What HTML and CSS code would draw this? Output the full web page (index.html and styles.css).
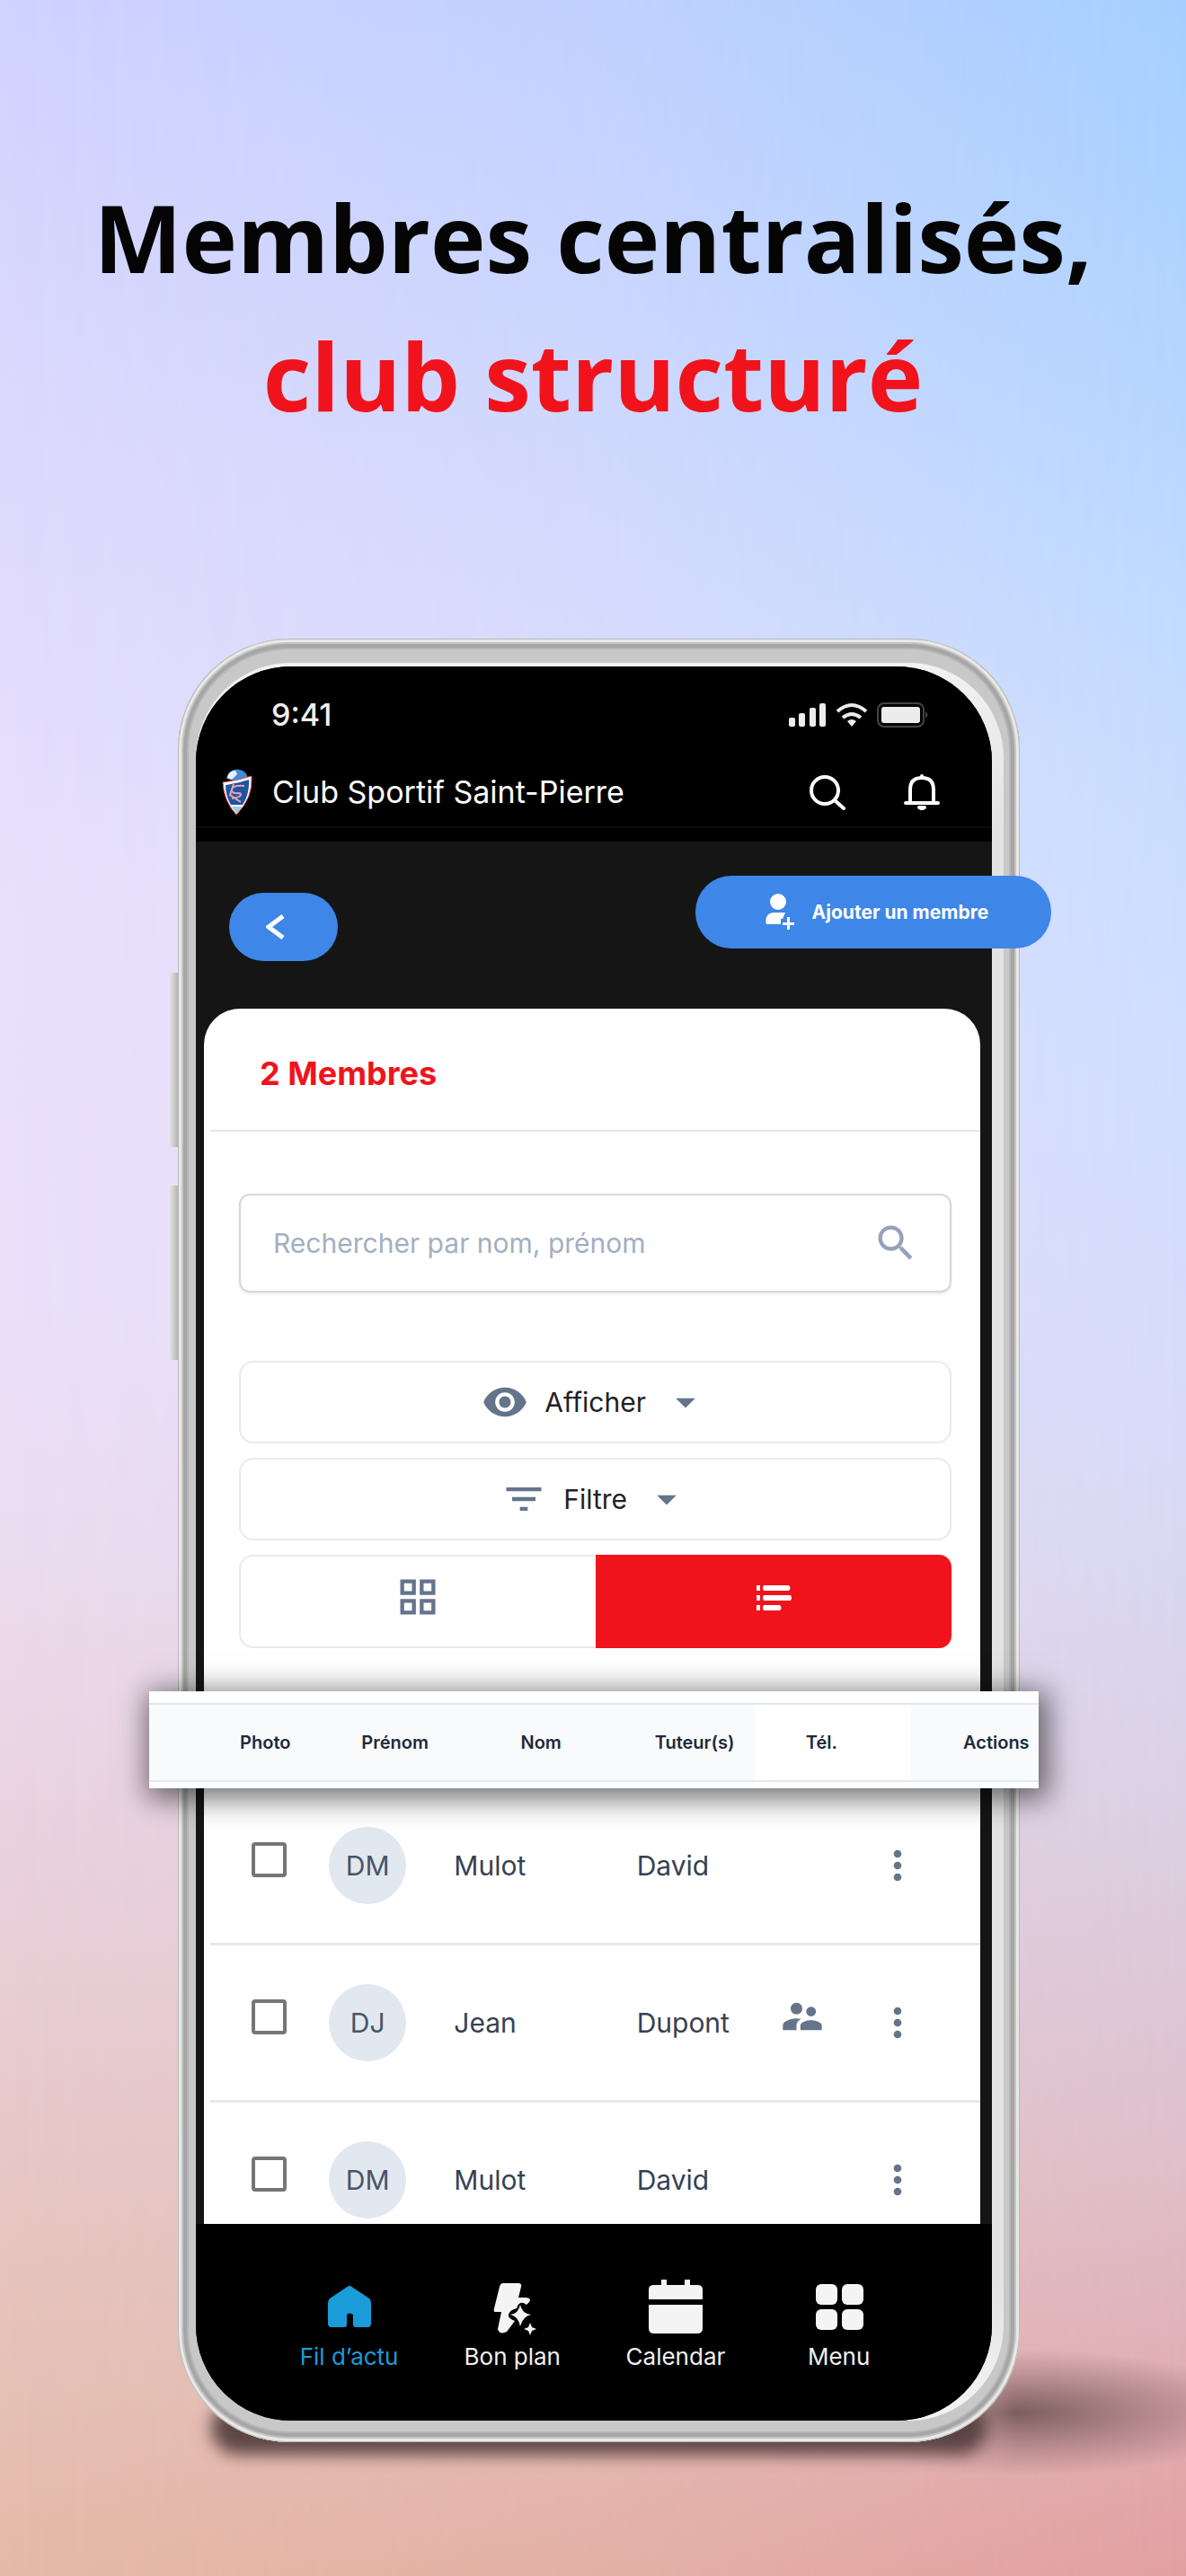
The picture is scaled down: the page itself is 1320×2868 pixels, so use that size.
FILE: index.html
```html
<!DOCTYPE html>
<html lang="fr">
<head>
    <meta charset="UTF-8">
    <meta name="viewport" content="width=device-width, initial-scale=1.0">
    <title>Membres centralisés, club structuré</title>
    <link rel="stylesheet" href="styles.css">
</head>
<body>
    <h1 class="headline">Membres centralisés, <span>club structuré</span></h1>

    <main class="stage">
        <div class="phone">
            <div class="bezel">
                <div class="screen">
                    <header class="topbar">
                        <div class="status">
                            <span class="time">9:41</span>
                            <svg class="status-icons" viewBox="0 0 156 28" aria-hidden="true">
                                <g fill="#ececec">
                                    <rect x="0" y="17" width="7" height="10" rx="2"/>
                                    <rect x="11" y="12" width="7" height="15" rx="2"/>
                                    <rect x="23" y="6" width="7" height="21" rx="2"/>
                                    <rect x="34" y="1" width="7" height="26" rx="2"/>
                                    <path d="M70 27l-5-6q5-4 10 0z"/>
                                    <rect x="103" y="5" width="43" height="18" rx="3"/>
                                </g>
                                <path d="M54 10q16-14 32 0M60 17q10-8 20 0" fill="none" stroke="#ececec" stroke-width="4"/>
                                <rect x="99" y="1" width="51" height="26" rx="7" fill="none" stroke="#444" stroke-width="2"/>
                                <path d="M152 10q5 4 0 8z" fill="#444"/>
                            </svg>
                        </div>
                        <div class="appbar">
                            <svg class="logo" viewBox="0 0 34 52" aria-hidden="true">
                                <path d="M5 11C7-3 27-3 29 11L17 14z" fill="#3b8fd6"/>
                                <path d="M6 10C7 4 11 2 15 2l2 4-6 6z" fill="#e8f1fb"/>
                                <path d="M1 15Q17 13 33 8Q35 32 16 51Q2 36 1 15z" fill="#fff" stroke="#d8444c"/>
                                <path d="M4 18Q18 16 30 12Q31 28 23 40H10Q4 30 4 18z" fill="#1f55a0"/>
                                <path d="M25 19q-13-1-14 4t9 4q4 4-9 6M13 17l-4 12 12 8" fill="none" stroke="#e6a3b4" stroke-width="2"/>
                                <path d="M11 42h12l-7 8z" fill="#a7c8ea"/>
                            </svg>
                            <span class="club">Club Sportif Saint-Pierre</span>
                            <button class="icon-btn" type="button" aria-label="Rechercher">
                                <svg viewBox="0 0 40 40" fill="none" stroke="#fff" stroke-width="4" stroke-linecap="round"><circle cx="17" cy="18" r="15"/><path d="M28 29l10 9"/></svg>
                            </button>
                            <button class="icon-btn" type="button" aria-label="Notifications">
                                <svg viewBox="0 0 40 40" fill="none" stroke="#fff" stroke-width="4" stroke-linecap="round" stroke-linejoin="round"><path d="M7 31V17C7 8 12 4 20 4s13 4 13 13v14M2 32h36"/><path d="M20 2v2"/><path d="M17 37h6l-2 1h-2z"/></svg>
                            </button>
                        </div>
                    </header>

                    <div class="toolbar">
                        <button class="back" type="button" aria-label="Retour">
                            <svg viewBox="0 0 22 28"><path d="M19 2L3 14l16 12" fill="none" stroke="#fff" stroke-width="5"/></svg>
                        </button>
                        <button class="add" type="button">
                            <svg viewBox="0 0 32 40" fill="#fff"><ellipse cx="14" cy="9" rx="9" ry="9"/><path d="M8 21h14l-3 7h-2v6H1c-2-7 1-12 7-13z"/><path d="M24 26h3v6h5v3h-5v5h-3v-5h-5v-3h5z"/></svg>
                            Ajouter un membre
                        </button>
                    </div>

                    <section class="card">
                        <h2 class="count">2 Membres</h2>

                        <div class="filters">
                            <label class="search">
                                <input type="text" placeholder="Rechercher par nom, prénom" aria-label="Rechercher par nom, prénom">
                                <svg viewBox="0 0 24 24" fill="#94a3b8"><path d="M15.5 14h-.79l-.28-.27C15.41 12.59 16 11.11 16 9.5 16 5.91 13.09 3 9.5 3S3 5.91 3 9.5 5.91 16 9.5 16c1.61 0 3.09-.59 4.23-1.57l.27.28v.79l5 4.99L20.49 19l-4.99-5zm-6 0C7.01 14 5 11.99 5 9.5S7.01 5 9.5 5 14 7.01 14 9.5 11.99 14 9.5 14z"/></svg>
                            </label>
                            <button class="drop" type="button">
                                <svg viewBox="0 0 24 24"><path d="M12 4.5C7 4.5 2.73 7.61 1 12c1.73 4.39 6 7.5 11 7.5s9.27-3.11 11-7.5c-1.73-4.39-6-7.5-11-7.5zM12 17c-2.76 0-5-2.24-5-5s2.24-5 5-5 5 2.24 5 5-2.24 5-5 5zm0-8c-1.66 0-3 1.34-3 3s1.34 3 3 3 3-1.34 3-3-1.34-3-3-3z"/></svg>
                                Afficher
                                <svg viewBox="0 0 24 24"><path d="M7 10l5 5 5-5z"/></svg>
                            </button>
                            <button class="drop" type="button">
                                <svg viewBox="0 0 24 24"><path d="M10 18h4v-2h-4v2zM3 6v2h18V6H3zm3 7h12v-2H6v2z"/></svg>
                                Filtre
                                <svg viewBox="0 0 24 24"><path d="M7 10l5 5 5-5z"/></svg>
                            </button>
                            <div class="views">
                                <button class="view" type="button" aria-label="Grille">
                                    <svg viewBox="0 0 24 24"><path d="M3 3v8h8V3H3zm6 6H5V5h4v4zm-6 4v8h8v-8H3zm6 6H5v-4h4v4zm4-16v8h8V3h-8zm6 6h-4V5h4v4zm-6 4v8h8v-8h-8zm6 6h-4v-4h4v4z"/></svg>
                                </button>
                                <button class="view view-on" type="button" aria-label="Liste">
                                    <svg viewBox="0 0 52 52"><path d="M7 13h4v6H7zM15 13h28q3 3 0 6H15q-2-3 0-6zM7 24h4v6H7zM15 24h30q2 3 0 6H15q-2-3 0-6zM7 35h4v6H7zM15 35h18q3 3 0 6H15q-2-3 0-6z"/></svg>
                                </button>
                            </div>
                        </div>

                        <table class="members">
                            <thead>
                                <tr>
                                    <td></td>
                                    <th>Photo</th>
                                    <th>Prénom</th>
                                    <th>Nom</th>
                                    <th>Tuteur(s)</th>
                                    <th class="tel">Tél.</th>
                                    <th class="actions">Actions</th>
                                </tr>
                            </thead>
                            <tbody>
                                <tr>
                                    <td class="raised"><input type="checkbox" aria-label="Mulot David"></td>
                                    <td><span class="avatar">DM</span></td>
                                    <td>Mulot</td>
                                    <td>David</td>
                                    <td></td>
                                    <td><button class="more" type="button" aria-label="Actions"><svg viewBox="0 0 24 24"><path d="M12 8c1.1 0 2-.9 2-2s-.9-2-2-2-2 .9-2 2 .9 2 2 2zm0 2c-1.1 0-2 .9-2 2s.9 2 2 2 2-.9 2-2-.9-2-2-2zm0 6c-1.1 0-2 .9-2 2s.9 2 2 2 2-.9 2-2-.9-2-2-2z"/></svg></button></td>
                                </tr>
                                <tr>
                                    <td class="raised"><input type="checkbox" aria-label="Jean Dupont"></td>
                                    <td><span class="avatar">DJ</span></td>
                                    <td>Jean</td>
                                    <td>Dupont</td>
                                    <td class="raised"><svg viewBox="0 0 24 24"><path d="M16.5 12c1.38 0 2.49-1.12 2.49-2.5S17.88 7 16.5 7C15.12 7 14 8.12 14 9.5s1.12 2.5 2.5 2.5zM9 11c1.66 0 2.99-1.34 2.99-3S10.66 5 9 5C7.34 5 6 6.34 6 8s1.34 3 3 3zm7.5 3c-1.83 0-5.5.92-5.5 2.75V19h11v-2.25c0-1.83-3.67-2.75-5.5-2.75zM9 13c-2.33 0-7 1.17-7 3.5V19h7v-2.25c0-.85.33-2.34 2.37-3.47C10.5 13.1 9.66 13 9 13z"/></svg></td>
                                    <td><button class="more" type="button" aria-label="Actions"><svg viewBox="0 0 24 24"><path d="M12 8c1.1 0 2-.9 2-2s-.9-2-2-2-2 .9-2 2 .9 2 2 2zm0 2c-1.1 0-2 .9-2 2s.9 2 2 2 2-.9 2-2-.9-2-2-2zm0 6c-1.1 0-2 .9-2 2s.9 2 2 2 2-.9 2-2-.9-2-2-2z"/></svg></button></td>
                                </tr>
                                <tr>
                                    <td class="raised"><input type="checkbox" aria-label="Mulot David"></td>
                                    <td><span class="avatar">DM</span></td>
                                    <td>Mulot</td>
                                    <td>David</td>
                                    <td></td>
                                    <td><button class="more" type="button" aria-label="Actions"><svg viewBox="0 0 24 24"><path d="M12 8c1.1 0 2-.9 2-2s-.9-2-2-2-2 .9-2 2 .9 2 2 2zm0 2c-1.1 0-2 .9-2 2s.9 2 2 2 2-.9 2-2-.9-2-2-2zm0 6c-1.1 0-2 .9-2 2s.9 2 2 2 2-.9 2-2-.9-2-2-2z"/></svg></button></td>
                                </tr>
                            </tbody>
                        </table>
                    </section>

                    <nav class="tabs">
                        <a class="tab tab-on" href="#">
                            <svg viewBox="0 0 60 60"><path d="M30 7Q32 7 34 9L52 21Q54 23 54 26V49Q54 53 50 53H37Q34 53 34 50V39Q30 36 27 39V50Q27 53 24 53H10Q6 53 6 49V26Q6 23 8 21L26 9Q28 7 30 7z"/></svg>
                            Fil d’actu
                        </a>
                        <a class="tab" href="#">
                            <svg viewBox="0 0 60 60"><path d="M20 4H37Q41 4 40 8L37 20H46Q52 21 49 25L46 28Q38 22 35 32Q27 34 26 39Q25 43 33 46L24 58Q16 62 14 55L18 36H11Q9 36 10 32L16 8Q17 4 20 4z"/><path d="M39 28Q41 38 51 39Q42 41 39 52Q37 41 28 39Q37 38 39 28zM50 48L52 53 57 55 52 57 50 62 48 57 43 55 48 53z"/></svg>
                            Bon plan
                        </a>
                        <a class="tab" href="#">
                            <svg viewBox="0 0 60 60"><path d="M0 22V11Q0 6 6 6H14V0H20V6H40V0H46V6H54Q60 6 60 11V22zM0 28H60V54Q60 60 54 60H6Q0 60 0 54z"/></svg>
                            Calendar
                        </a>
                        <a class="tab" href="#">
                            <svg viewBox="0 0 60 60"><rect x="4" y="5" width="24" height="23" rx="6"/><rect x="33" y="5" width="24" height="23" rx="6"/><rect x="4" y="33" width="24" height="23" rx="6"/><rect x="33" y="33" width="24" height="23" rx="6"/></svg>
                            Menu
                        </a>
                    </nav>
                </div>
            </div>
        </div>
    </main>
</body>
</html>
```
FILE: styles.css
```css
* {
    margin: 0;
    padding: 0;
    box-sizing: border-box;
}

body {
    position: relative;
    z-index: 0;
    min-height: 100vh;
    font-family: "Inter", "Liberation Sans", sans-serif;
    background: linear-gradient(#d0d2ff 0%, #dedafd 18%, #e9e0fc 36%, #eae0fa 50%, #ecdcf0 60%, #e9d0da 74%, #e7c6c2 86%, #e5baa8 100%);
}

/* right-hand colours, faded in over the left ones */
body::before {
    content: "";
    position: absolute;
    inset: 0;
    z-index: -2;
    background: linear-gradient(#a5cfff 0%, #b4d5ff 14%, #c6dcff 28%, #d2deff 42%, #d8dbf8 56%, #dbd0e4 70%, #dfbfca 84%, #e29fa1 100%);
    -webkit-mask-image: linear-gradient(to right, transparent, rgba(0, 0, 0, 0.35) 50%, #000);
    mask-image: linear-gradient(to right, transparent, rgba(0, 0, 0, 0.35) 50%, #000);
}

button {
    border: none;
    background: none;
    font-family: inherit;
    cursor: pointer;
}

svg {
    display: block;
    flex: none;
}

.headline {
    padding: 187px 24px 216px;
    font-family: "Open Sans", "Noto Sans", sans-serif;
    font-size: 104px;
    font-weight: 700;
    line-height: 154px;
    text-align: center;
    color: #050505;
}

.headline span {
    display: block;
    color: #f1131b;
}

/* Phone */
.stage {
    position: relative;
    padding: 0 14% 149px 15%;
}

/* shadow cast to the right of the phone */
.stage::after {
    content: "";
    position: absolute;
    right: 0;
    bottom: 112px;
    width: 24%;
    height: 140px;
    z-index: -1;
    background: radial-gradient(ellipse 90% 50% at 40% 50%, rgba(80, 60, 60, 0.7), rgba(90, 65, 70, 0.35) 50%, transparent);
    -webkit-mask-image: linear-gradient(to right, transparent, #000 40%);
    mask-image: linear-gradient(to right, transparent, #000 40%);
}

.phone {
    position: relative;
    padding: 27px 18px 24px 20px;
    border-radius: 124px;
    background: #c8c8c8;
    box-shadow: inset 0 0 0 1px #b8b8b8, inset 0 0 0 4px #e9e9e7, inset 0 0 0 6px #c4c4c4, inset 0 0 0 10px #a6a6a6, inset 0 0 0 12px #b6b6b6;
}

.phone::before {
    content: "";
    position: absolute;
    left: -10px;
    top: 372px;
    width: 10px;
    height: 431px;
    border-radius: 4px 0 0 4px;
    background:
        linear-gradient(to right, #e8e8e8, #b4b4b4) top / 100% 194px no-repeat,
        linear-gradient(to right, #e8e8e8, #b4b4b4) bottom / 100% 194px no-repeat;
}

.phone::after {
    content: "";
    position: absolute;
    left: 4%;
    right: 4%;
    bottom: -14px;
    height: 60px;
    z-index: -1;
    background: rgba(70, 50, 50, 0.85);
    border-radius: 30px;
    filter: blur(9px);
}

.bezel {
    padding: 4px 13px 0 0;
    border-radius: 106px;
    background: linear-gradient(#f2f2f2, #e2e2e2 10%, #e2e2e2 92%, #f4f4f4);
}

.screen {
    position: relative;
    border-radius: 106px;
    background: #151515;
}

/* Top bars */
.topbar {
    padding-top: 32px;
    border-bottom: 15px solid #000;
    border-radius: 106px 106px 0 0;
    background: #000;
}

.status {
    display: flex;
    align-items: center;
    justify-content: space-between;
    padding: 0 70px 0 84px;
    line-height: 44px;
}

.time {
    font-size: 34px;
    font-weight: 500;
    color: #f0f0f0;
}

.status-icons {
    width: 156px;
    height: 28px;
}

.appbar {
    display: flex;
    align-items: center;
    margin-top: 38px;
    padding: 0 58px 12px 29px;
    border-bottom: 2px solid #0a0a12;
}

.logo {
    width: 34px;
    height: 52px;
}

.club {
    flex: 1;
    margin-left: 22px;
    font-size: 34px;
    line-height: 44px;
    color: #fff;
}

.icon-btn {
    margin-left: 65px;
}

.icon-btn svg {
    width: 40px;
    height: 40px;
}

.toolbar {
    padding: 57px 37px 53px;
}

.back {
    display: flex;
    align-items: center;
    padding: 24px 58px 24px 41px;
    border-radius: 38px;
    background: #3e86e8;
}

.back svg {
    width: 22px;
    height: 28px;
}

.add {
    position: absolute;
    top: 233px;
    right: -66px;
    display: flex;
    align-items: center;
    gap: 20px;
    padding: 20px 70px 21px 78px;
    border-radius: 40px;
    background: #3e86e8;
    color: #fff;
    font-size: 21px;
    font-weight: 700;
}

.add svg {
    width: 32px;
    height: 40px;
}

/* Members card */
.card {
    margin: 0 13px 0 9px;
    border-radius: 40px 40px 0 0;
    background: #fff;
}

.count {
    margin-left: 7px;
    padding: 50px 55px 41px;
    border-bottom: 2px solid #e5e7e9;
    font-size: 36px;
    line-height: 44px;
    color: #f1131b;
}

.filters {
    display: flex;
    flex-direction: column;
    gap: 16px;
    padding: 69px 32px 48px 39px;
}

.search {
    display: flex;
    align-items: center;
    height: 110px;
    margin-bottom: 60px;
    padding: 0 34px 0 36px;
    border: 2px solid #d2d8df;
    border-radius: 12px;
    box-shadow: 0 2px 3px rgba(0, 0, 0, 0.08);
}

.search input {
    flex: 1;
    min-width: 0;
    border: none;
    outline: none;
    background: none;
    font-family: inherit;
    font-size: 30px;
    color: #334155;
}

.search input::placeholder {
    color: #a3afc1;
    opacity: 1;
}

.search svg {
    width: 52px;
    height: 52px;
}

.drop {
    display: flex;
    align-items: center;
    justify-content: center;
    gap: 18px;
    height: 92px;
    border: 2px solid #e7eaee;
    border-radius: 16px;
    font-size: 30px;
    color: #222;
}

.drop svg,
.view svg {
    width: 52px;
    height: 52px;
    fill: #64748b;
}

.views {
    display: grid;
    grid-template-columns: 1fr 1fr;
    height: 104px;
}

.view {
    display: flex;
    align-items: center;
    justify-content: center;
    padding-bottom: 10px;
    border: 2px solid #e7eaee;
    border-right: none;
    border-radius: 16px 0 0 16px;
}

.view-on {
    border: none;
    border-radius: 0 14px 14px 0;
    background: #f1131b;
}

.view-on svg {
    fill: #fff;
}

/* Members table */
.members,
.members thead,
.members tbody {
    display: block;
}

.members th,
.members td {
    display: flex;
    align-items: center;
}

.members thead {
    position: relative;
    margin: 0 -65px 0 -61px;
    padding: 13px 0 7px;
    background: #fff;
    box-shadow: 4px 6px 30px 6px rgba(0, 0, 0, 0.55);
}

.members thead tr {
    display: grid;
    grid-template-columns: 101fr 135fr 177fr 149fr 111fr 174fr 142fr;
    border-top: 2px solid #e2e8f0;
    border-bottom: 2px solid #e2e8f0;
    background: #f8fafc;
}

.members th {
    height: 84px;
    font-size: 20px;
    font-weight: 600;
    color: #1e293b;
}

.members .tel {
    padding-left: 57px;
    background: #fff;
}

.members .actions {
    padding-left: 58px;
}

.members tbody tr {
    display: grid;
    grid-template-columns: 86fr 139fr 203fr 158fr 106fr 118fr;
    margin-left: 7px;
    padding: 43px 0 43px 46px;
    border-bottom: 3px solid #e6e8ee;
    font-size: 30px;
    color: #374151;
}

.members tbody tr:last-child {
    padding-bottom: 6px;
    border-bottom: none;
}

.members .raised {
    padding-bottom: 14px;
}

.members input {
    width: 39px;
    height: 39px;
    appearance: none;
    border: 4px solid #767676;
    border-radius: 4px;
}

.members svg {
    width: 52px;
    height: 52px;
    fill: #64748b;
}

.avatar {
    display: flex;
    align-items: center;
    justify-content: center;
    width: 86px;
    height: 86px;
    border-radius: 50%;
    background: #e2e8f0;
    color: #475569;
}

/* Bottom navigation */
.tabs {
    display: grid;
    grid-template-columns: repeat(4, 1fr);
    padding: 62px 9% 55px;
    border-radius: 0 0 106px 106px;
    background: #000;
}

.tab {
    display: flex;
    flex-direction: column;
    align-items: center;
    gap: 10px;
    font-size: 26px;
    line-height: 32px;
    text-decoration: none;
    color: #f0f0f0;
}

.tab svg {
    width: 60px;
    height: 60px;
    fill: #f4f4f4;
    overflow: visible;
}

.tab-on {
    color: #1a9cd8;
}

.tab-on svg {
    fill: #1a9cd8;
}
```
